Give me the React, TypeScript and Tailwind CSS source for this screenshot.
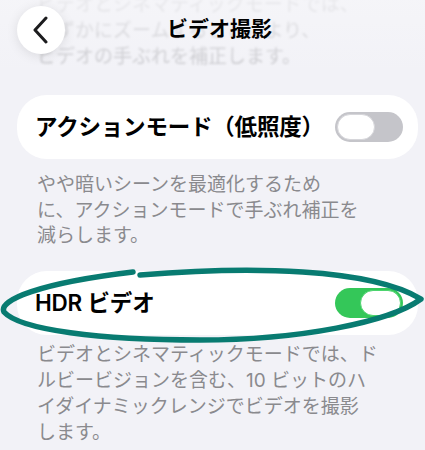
import React, { useState } from 'react';

const FONT = "font-['Inter','Noto_Sans_CJK_JP',sans-serif]";

function Toggle({ on, onChange }: { on: boolean; onChange: () => void }) {
    return (
        <button
            onClick={onChange}
            className={`flex items-center w-[68px] h-[30px] rounded-full p-[2px] shrink-0 ${on ? 'bg-[#34c759] justify-end' : 'bg-[#c5c5ca] justify-start'}`}
        >
            <span
                className={`block h-[26px] rounded-full bg-white ${on ? 'w-[41px] border-[1.5px] border-[#4cd46e]' : 'w-[38px] border border-[#d6d6da]'}`}
            />
        </button>
    );
}

function SettingRow({ label, on, onChange }: { label: string; on: boolean; onChange: () => void }) {
    return (
        <div className="ml-[17px] mr-[7px] h-[64px] rounded-[30px] bg-white flex items-center justify-between pl-[18px] pr-[15px]">
            <span className="text-[22.5px] font-semibold text-black tracking-[-0.2px]">{label}</span>
            <Toggle on={on} onChange={onChange} />
        </div>
    );
}

export default function App() {
    const [lowLight, setLowLight] = useState(false);
    const [hdr, setHdr] = useState(true);

    return (
        <div className={`relative w-[425px] h-[450px] overflow-hidden bg-[#f2f2f7] ${FONT}`}>
            {/* previous section's footer, scrolled under the nav bar */}
            <div className="-mt-[8px] px-[37px] text-[19px] leading-[26px] text-[#8a8a8e] opacity-40 blur-[1.3px]">
                ビデオとシネマティックモードでは、
                <br />
                わずかにズームすることにより、
                <br />
                ビデオの手ぶれを補正します。
            </div>

            <div className="mt-[25px]">
                <SettingRow label="アクションモード（低照度）" on={lowLight} onChange={() => setLowLight(!lowLight)} />
                <p className="px-[37px] pt-[13px] text-[19px] leading-[25.5px] text-[#8a8a8e]">
                    やや暗いシーンを最適化するため
                    <br />
                    に、アクションモードで手ぶれ補正を
                    <br />
                    減らします。
                </p>
            </div>

            <div className="mt-[22px]">
                <SettingRow label="HDR ビデオ" on={hdr} onChange={() => setHdr(!hdr)} />
                <p className="px-[37px] pt-[7px] text-[19px] leading-[26.3px] text-[#8a8a8e]">
                    ビデオとシネマティックモードでは、ド
                    <br />
                    ルビービジョンを含む、10 ビットのハ
                    <br />
                    イダイナミックレンジでビデオを撮影
                    <br />
                    します。
                </p>
            </div>

            {/* nav bar */}
            <div className="absolute top-0 inset-x-0 h-[72px] bg-gradient-to-b from-[#f6f6f9]/70 to-[#f2f2f7]/0">
                <button className="absolute left-[17px] top-[6px] w-[48px] h-[48px] rounded-full bg-white shadow-[0_2px_12px_rgba(0,0,0,0.10)] flex items-center justify-center">
                    <svg width="20" height="28" viewBox="0 0 20 28" fill="none">
                        <path d="M15 2 L4 14 L15 26" stroke="#1c1c1e" strokeWidth="3" strokeLinecap="round" strokeLinejoin="round" />
                    </svg>
                </button>
                <div className="absolute top-[14px] inset-x-0 pl-[14px] text-center text-[21px] font-bold text-black leading-[30px]">
                    ビデオ撮影
                </div>
            </div>

            {/* hand-drawn marker loop around the HDR row */}
            <svg className="absolute inset-0 pointer-events-none" width="425" height="450" viewBox="0 0 425 450" fill="none">
                <path
                    d="M140 275 C 250 266, 370 268, 421 299 C 390 322, 300 340, 200 340 C 100 340, 20 330, 4 312 C -2 300, 40 283, 133 272"
                    stroke="#087b71"
                    strokeWidth="5.5"
                    strokeLinecap="round"
                    strokeLinejoin="round"
                />
            </svg>
        </div>
    );
}
